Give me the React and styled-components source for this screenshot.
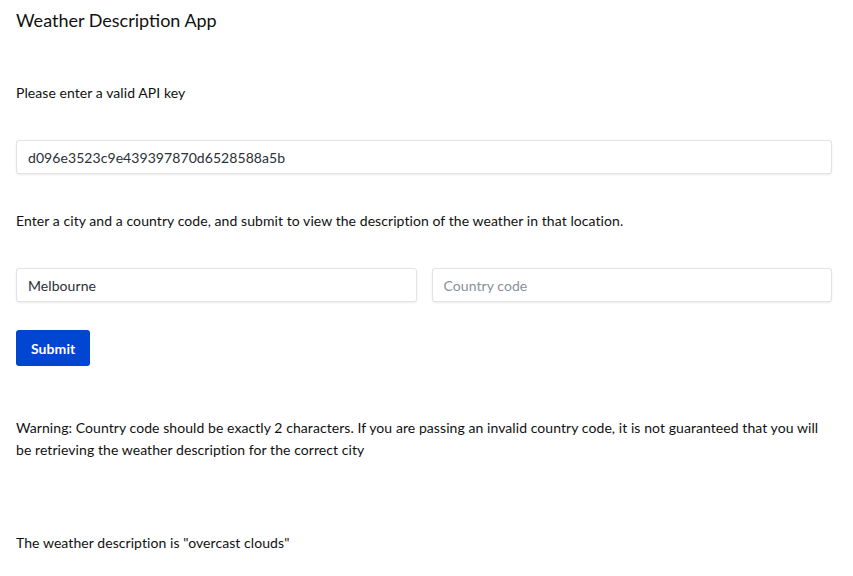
import styled, { createGlobalStyle } from "styled-components";

const GlobalStyle = createGlobalStyle`
  body {
    margin: 0;
    background: #ffffff;
    font-family: Lato, "Open Sans", sans-serif;
    color: #111111;
  }
`;

const Page = styled.main`
  display: flex;
  flex-direction: column;
  padding: 8px 21px 0 16px;
`;

const Title = styled.h1`
  margin: 0;
  font-size: 18px;
  line-height: 24px;
  font-weight: 400;
`;

const Text = styled.p`
  margin: ${(props) => props.$top || 0}px 0 0 0;
  font-size: 14px;
  letter-spacing: 0.07px;
  line-height: ${(props) => props.$lh || 20}px;
`;

const Input = styled.input`
  box-sizing: border-box;
  width: 100%;
  height: 34px;
  margin: 0;
  padding: 0 11px;
  border: 1px solid #e3e3e3;
  border-radius: 3px;
  box-shadow: 0 1px 2px rgba(0, 0, 0, 0.08);
  font-family: Lato, "Open Sans", sans-serif;
  font-size: 14px;
  letter-spacing: 0.07px;
  color: #2b2f36;
  background: #ffffff;
  outline: none;

  &::placeholder {
    color: #8a8f99;
  }
`;

const Field = styled.div`
  margin-top: ${(props) => props.$top}px;
`;

const Row = styled.div`
  display: grid;
  grid-template-columns: 1fr 1fr;
  gap: 15px;
  margin-top: 37px;
`;

const Button = styled.button`
  align-self: flex-start;
  margin-top: 28px;
  height: 36px;
  padding: 0 15px;
  border: none;
  border-radius: 3px;
  background: #0046d1;
  color: #ffffff;
  font-family: Lato, "Open Sans", sans-serif;
  font-size: 14px;
  letter-spacing: 0.07px;
  font-weight: 700;
  cursor: pointer;
`;

export default function App() {
  return (
    <Page>
      <GlobalStyle />
      <Title>Weather Description App</Title>
      <Text $top={51}>Please enter a valid API key</Text>
      <Field $top={37}>
        <Input defaultValue="d096e3523c9e439397870d6528588a5b" />
      </Field>
      <Text $top={37}>
        Enter a city and a country code, and submit to view the description of
        the weather in that location.
      </Text>
      <Row>
        <Input defaultValue="Melbourne" />
        <Input placeholder="Country code" />
      </Row>
      <Button>Submit</Button>
      <Text $top={51} $lh={22}>
        Warning: Country code should be exactly 2 characters. If you are
        passing an invalid country code, it is not guaranteed that you will be
        retrieving the weather description for the correct city
      </Text>
      <Text $top={72}>The weather description is "overcast clouds"</Text>
    </Page>
  );
}
